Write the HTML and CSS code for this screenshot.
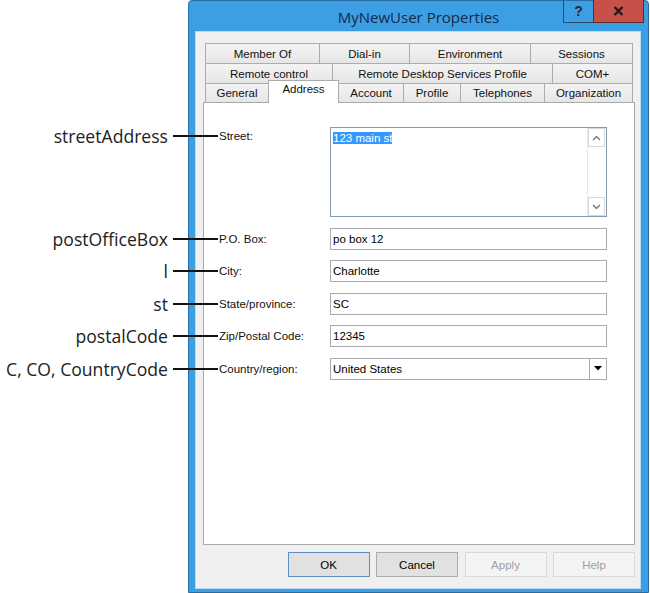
FILE: index.html
```html
<!DOCTYPE html>
<html>
<head>
<meta charset="utf-8">
<link rel="stylesheet" href="styles.css">
</head>
<body>
<div class="stage">
  <div class="window">
    <div class="titlebar">
      <div class="title">MyNewUser Properties</div>
      <div class="caption">
        <div class="cbtn help">?</div>
        <div class="cbtn close">
          <svg width="11" height="10" viewBox="0 0 11 10"><path d="M1.5 1 L9.5 9 M9.5 1 L1.5 9" stroke="#1a1a1a" stroke-width="2.4" fill="none"/></svg>
        </div>
      </div>
    </div>
    <div class="client">
      <div class="tabs">
        <div class="tabrow">
          <div class="tab w-member">Member Of</div>
          <div class="tab w-dialin">Dial-in</div>
          <div class="tab w-env">Environment</div>
          <div class="tab w-sess">Sessions</div>
        </div>
        <div class="tabrow">
          <div class="tab w-remote">Remote control</div>
          <div class="tab w-rds">Remote Desktop Services Profile</div>
          <div class="tab w-com">COM+</div>
        </div>
        <div class="tabrow last">
          <div class="tab w-general">General</div>
          <div class="tab w-address selected">Address</div>
          <div class="tab w-account">Account</div>
          <div class="tab w-profile">Profile</div>
          <div class="tab w-tel">Telephones</div>
          <div class="tab w-org">Organization</div>
        </div>
      </div>
      <div class="panel">
        <div class="form">
          <div class="lbl top"><span class="anno">streetAddress</span>Street:</div>
          <div class="memo">
            <div class="memo-text"><span class="hl">123 main st</span></div>
            <div class="vscroll">
              <div class="sb-btn"><svg width="9" height="6" viewBox="0 0 9 6"><path d="M1 5 L4.5 1.5 L8 5" stroke="#6a6a6a" stroke-width="1.2" fill="none"/></svg></div>
              <div class="sb-btn"><svg width="9" height="6" viewBox="0 0 9 6"><path d="M1 1 L4.5 4.5 L8 1" stroke="#6a6a6a" stroke-width="1.2" fill="none"/></svg></div>
            </div>
          </div>

          <div class="lbl"><span class="anno">postOfficeBox</span>P.O. Box:</div>
          <div class="field">po box 12</div>

          <div class="lbl"><span class="anno">l</span>City:</div>
          <div class="field">Charlotte</div>

          <div class="lbl"><span class="anno">st</span>State/province:</div>
          <div class="field">SC</div>

          <div class="lbl"><span class="anno">postalCode</span>Zip/Postal Code:</div>
          <div class="field">12345</div>

          <div class="lbl"><span class="anno">C, CO, CountryCode</span>Country/region:</div>
          <div class="field combo">
            <div class="combo-text">United States</div>
            <div class="combo-arrow"><svg width="8" height="5" viewBox="0 0 8 5"><path d="M0 0 H8 L4 4.5 Z" fill="#000"/></svg></div>
          </div>
        </div>
      </div>
      <div class="buttons">
        <div class="btn default">OK</div>
        <div class="btn">Cancel</div>
        <div class="btn disabled">Apply</div>
        <div class="btn disabled">Help</div>
      </div>
    </div>
  </div>
</div>
</body>
</html>
```
FILE: styles.css
```css
* { box-sizing: border-box; }
html, body { margin: 0; padding: 0; }
body {
  width: 650px;
  height: 593px;
  overflow: hidden;
  background: #ffffff;
  font-family: "Liberation Sans", Arial, sans-serif;
}
.stage { padding-left: 188px; }

.window {
  width: 461px;
  height: 593px;
  background: #3d9fe3;
  border: 1px solid #2a6da5;
  border-radius: 4px 4px 0 0;
  display: flex;
  flex-direction: column;
}
.titlebar {
  position: relative;
  height: 31px;
  flex: none;
  display: flex;
  justify-content: center;
}
.title {
  font-family: "Open Sans", sans-serif;
  font-size: 15px;
  line-height: 20px;
  padding-top: 6px;
  color: #14294a;
}
.caption {
  position: absolute;
  top: -1px;
  right: 4px;
  display: flex;
}
.cbtn {
  height: 23px;
  display: flex;
  align-items: center;
  justify-content: center;
  border: 1px solid #2b4d6b;
  border-top: none;
}
.cbtn.help {
  width: 31px;
  font-weight: bold;
  font-size: 14px;
  color: #1d2b3a;
}
.cbtn.close {
  width: 51px;
  margin-left: -1px;
  background: #c8504b;
  border-color: #5d2c2a;
}

.client {
  flex: 1;
  margin: 0 8px 4px 7px;
  background: #f0f0f0;
  outline: 1px solid #bcdaf2;
  padding: 11px 5px 0 7px;
  display: flex;
  flex-direction: column;
}

.tabs {
  margin-left: 2px;
  width: 428px;
  font-size: 11.5px;
}
.tabrow {
  display: flex;
  height: 20px;
  align-items: flex-end;
}
.tabrow.last { height: 19px; }
.tab {
  height: 100%;
  border: 1px solid #acacac;
  border-bottom: none;
  border-right: none;
  background: linear-gradient(#f3f3f3, #e6e6e6);
  display: flex;
  align-items: center;
  justify-content: center;
  white-space: nowrap;
  color: #111;
}
.tab:last-child { border-right: 1px solid #acacac; }
.tab.selected {
  position: relative;
  z-index: 2;
  height: 23px;
  margin-bottom: -1px;
  margin-right: -1px;
  border-right: 1px solid #acacac;
  background: #ffffff;
  align-items: flex-start;
  padding-top: 2px;
}
.w-member { width: 114px; }
.w-dialin { width: 90px; }
.w-env { width: 121px; }
.w-sess { width: 103px; }
.w-remote { width: 127px; }
.w-rds { width: 220px; }
.w-com { width: 81px; }
.w-general { width: 63px; }
.w-address { width: 71px; }
.w-account { width: 65px; }
.w-profile { width: 57px; }
.w-tel { width: 84px; }
.w-org { width: 89px; }

.panel {
  width: 432px;
  height: 443px;
  flex: none;
  background: #ffffff;
  border: 1px solid #a9a9a9;
  padding: 24px 0 0 15px;
}
.form {
  display: grid;
  grid-template-columns: 111px 277px;
  row-gap: 10.5px;
}
.lbl {
  position: relative;
  align-self: center;
  font-size: 11.5px;
  line-height: 14px;
  color: #111;
  white-space: nowrap;
}
.lbl.top { align-self: start; margin-top: 2px; }
.lbl::before {
  content: "";
  position: absolute;
  right: calc(100% + 1px);
  top: 50%;
  margin-top: -1px;
  width: 45px;
  height: 2px;
  background: #111;
}
.anno {
  position: absolute;
  right: calc(100% + 51px);
  top: 50%;
  transform: translateY(-50%);
  font-family: "Open Sans", sans-serif;
  font-size: 17.6px;
  line-height: 18px;
  color: #222;
  white-space: nowrap;
}

.memo {
  height: 90px;
  border: 1px solid #8799ae;
  background: #fff;
  display: flex;
}
.memo-text {
  flex: 1;
  padding: 4px 0 0 2px;
  font-size: 11.5px;
  line-height: 13px;
}
.hl { background: #3399ff; color: #fff; }
.vscroll {
  width: 18px;
  margin: 0 1px 0 0;
  display: flex;
  flex-direction: column;
  justify-content: space-between;
  border-left: 1px solid #e9e9e9;
}
.sb-btn {
  height: 19px;
  border: 1px solid #d6d6d6;
  background: #fff;
  display: flex;
  align-items: center;
  justify-content: center;
}

.field {
  height: 22px;
  border: 1px solid #a8abb2;
  background: #fff;
  font-size: 11.5px;
  line-height: 20px;
  padding-left: 2px;
  color: #000;
}
.combo { display: flex; padding-left: 0; }
.combo-text { flex: 1; padding-left: 2px; }
.combo-arrow {
  width: 17px;
  border-left: 1px solid #a8abb2;
  display: flex;
  align-items: center;
  justify-content: center;
}

.buttons {
  margin-top: 7px;
  width: 432px;
  display: flex;
  justify-content: flex-end;
  gap: 6.5px;
}
.btn {
  width: 82px;
  height: 25px;
  border: 1px solid #adadad;
  background: #e1e1e1;
  font-size: 11.5px;
  display: flex;
  align-items: center;
  justify-content: center;
  color: #000;
}
.btn.default { border-color: #5f8fc0; }
.btn.disabled { background: #f4f4f4; border-color: #d9d9d9; color: #a0a0a0; }
```
